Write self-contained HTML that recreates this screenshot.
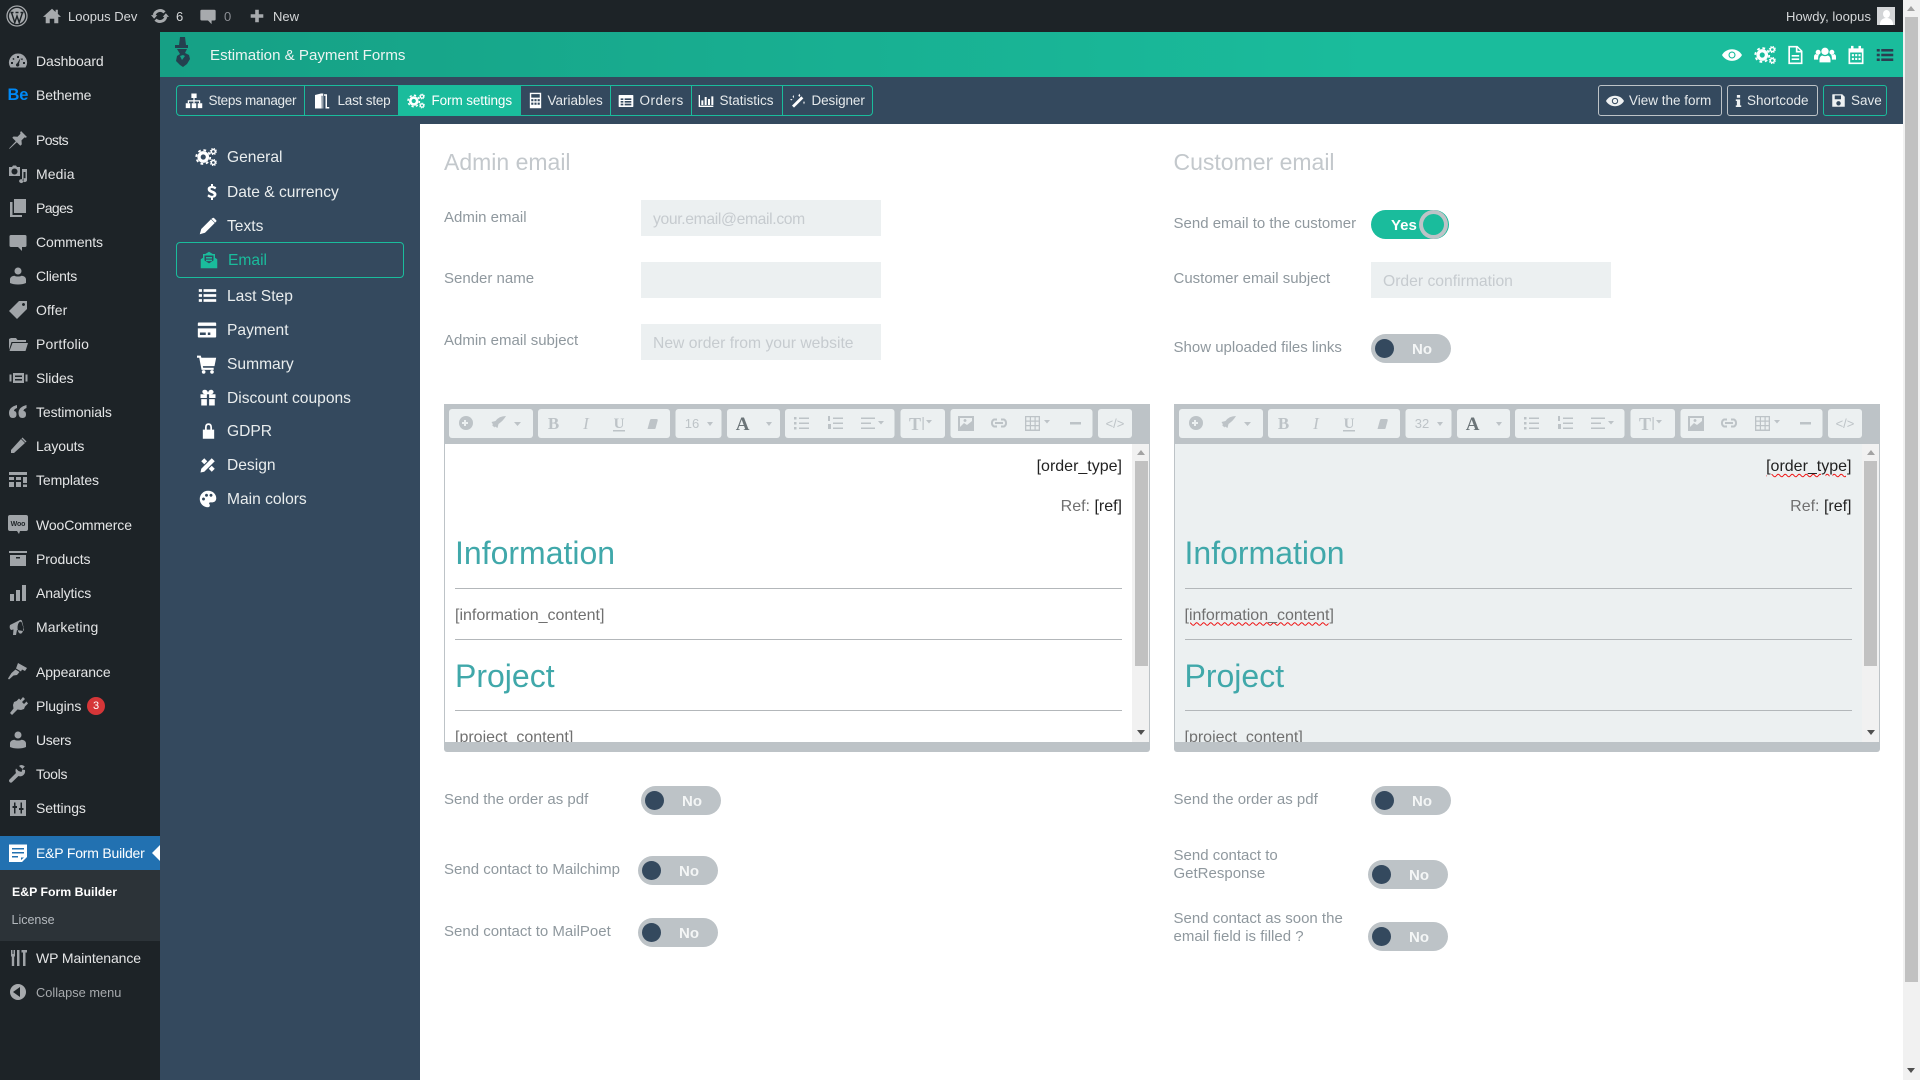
<!DOCTYPE html>
<html><head><meta charset="utf-8"><title>E&amp;P Form Builder</title>
<style>
html,body{margin:0;padding:0;width:1920px;height:1080px;overflow:hidden;background:#fff;font-family:"Liberation Sans",sans-serif}
*{box-sizing:border-box}
.a{position:absolute}
.t{position:absolute;white-space:nowrap}
svg.ic{position:absolute;overflow:visible}
#bar{left:0;top:0;width:1920px;height:32px;background:#1d2327;color:#d5d7d9;font-size:13px;line-height:33px}
#side{left:0;top:32px;width:160px;height:1048px;background:#1d2327}
.m{position:absolute;left:0;width:160px;height:34px;line-height:34px;font-size:14px;color:#e4e5e6;letter-spacing:-.1px}
.m span{position:absolute;left:36px;white-space:nowrap}
.m svg{position:absolute;left:8px;top:7px;width:20px;height:20px;color:#a0a4a8}
#head{left:160px;top:32px;width:1743px;height:45px;background:linear-gradient(to right,#16a085 0,#1abc9c 70%);color:#fff}
#panel{left:160px;top:77px;width:1743px;height:1003px;background:#34495e}
#main{left:420px;top:124px;width:1483px;height:956px;background:#fff}
#sb{left:1903px;top:0;width:17px;height:1080px;background:#f1f1f1}
#tabs{left:176px;top:85px;width:697px;height:31px;border:1px solid #1abc9c;border-radius:4px;overflow:hidden}
.tab{position:absolute;top:85px;height:31px;color:#e6eaec;font-size:13.5px;line-height:32px;letter-spacing:-.1px;white-space:nowrap}
.sep{position:absolute;top:86px;width:1px;height:29px;background:#1abc9c}
.btn{position:absolute;top:85px;height:31px;border:1px solid #bdc3c7;border-radius:3px;color:#e6eaec;font-size:13.5px;line-height:30px}
.n{position:absolute;left:227px;font-size:15.6px;color:#e9edee;line-height:24px;white-space:nowrap;margin-top:1px}
.l{position:absolute;color:#8f989e;font-size:15px;line-height:18px;white-space:nowrap;margin-top:1px}
.h{position:absolute;font-size:23px;line-height:30px;color:#c3c8cc;top:147px;white-space:nowrap}
.inp{position:absolute;width:240px;height:36px;background:#ecf0f1;color:#c6cbcf;font-size:15.7px;line-height:39px;padding-left:12px;white-space:nowrap}
.tg{position:absolute;width:80px;height:29px;border-radius:15px;background:#bdc3c7;color:#f4f6f6;font-weight:bold;font-size:15px;line-height:31px}
.tg i{position:absolute;left:4px;top:5px;width:19px;height:19px;border-radius:50%;background:#34495e}
.tg b{position:absolute;left:41px;top:0}
.ed{position:absolute;top:404px;width:706px;height:348px;background:#bdc3c7;border-radius:0 0 3px 3px}
.body{position:absolute;left:0;top:40px;width:706px;height:298px;border:solid #bdc3c7;border-width:0 1px;overflow:hidden}
.ed .tx{position:absolute;font-size:16px;line-height:20px;white-space:nowrap;color:#707070}
.ed .hd{position:absolute;left:11px;font-size:32px;line-height:38px;color:#40a8aa;white-space:nowrap}
.ed .ln{position:absolute;left:11px;width:667px;height:1px;background:#b3b7ba}
.spell{text-decoration:underline wavy #e11;text-decoration-thickness:1px;text-underline-offset:2px}
</style></head><body>

<svg width="0" height="0" style="position:absolute">
<defs>
<symbol id="cogs" viewBox="0 0 24 24"><g fill="none" stroke="currentColor"><circle cx="9" cy="12" r="4.6" stroke-width="3.6"/><circle cx="9" cy="12" r="7.6" stroke-width="2" stroke-dasharray="3 2.96"/><circle cx="20" cy="6" r="2.2" stroke-width="1.6"/><circle cx="20" cy="6" r="3.4" stroke-width="1" stroke-dasharray="1.4 1.27"/><circle cx="20" cy="18" r="2.2" stroke-width="1.6"/><circle cx="20" cy="18" r="3.4" stroke-width="1" stroke-dasharray="1.4 1.27"/></g></symbol>
<symbol id="eye" viewBox="0 0 24 24"><path fill="currentColor" fill-rule="evenodd" d="M0 12C5 2.700 19 2.700 24 12C19 21.300 5 21.300 0 12ZM12 7.800a4.200 4.200 0 1 0 .01 0Z"/><circle cx="12" cy="12" r="2.900" fill="currentColor"/></symbol>
<symbol id="file" viewBox="0 0 24 24"><path fill="currentColor" fill-rule="evenodd" d="M4 1h11l6 6v16H4ZM6 3v18h13V9h-6V3ZM15 3.500V7h3.500ZM8 12h9v2H8ZM8 16h9v2H8Z"/></symbol>
<symbol id="users" viewBox="0 0 24 24"><g fill="currentColor"><circle cx="12" cy="8" r="4"/><circle cx="4.500" cy="9" r="2.700"/><circle cx="19.500" cy="9" r="2.700"/><path d="M6 20v-3c0-3 2-4.500 3-4.500 1.500 1 4.500 1 6 0 1 0 3 1.500 3 4.500v3Z"/><path d="M0 17v-3c0-2 1-3 2-3 1 .8 2.500.8 3.500.5C4.500 13 4.500 15 4.500 17ZM24 17v-3c0-2-1-3-2-3-1 .8-2.500.8-3.500.5 1 1.500 1 3.500 1 5.500Z"/></g></symbol>
<symbol id="cal" viewBox="0 0 24 24"><path fill="currentColor" fill-rule="evenodd" d="M3 4h3V1h3v3h6V1h3v3h3v19H3ZM5 9v12h14V9ZM7 11h2.500v2.500H7ZM11 11h2.500v2.500H11ZM15 11h2.500v2.500H15ZM7 15.500h2.500V18H7ZM11 15.500h2.500V18H11ZM15 15.500h2.500V18H15Z"/></symbol>
<symbol id="list" viewBox="0 0 24 24"><g fill="currentColor"><rect x="1" y="4" width="4" height="3.400"/><rect x="7" y="4" width="16" height="3.400"/><rect x="1" y="10.300" width="4" height="3.400"/><rect x="7" y="10.300" width="16" height="3.400"/><rect x="1" y="16.600" width="4" height="3.400"/><rect x="7" y="16.600" width="16" height="3.400"/></g></symbol>
<symbol id="sitemap" viewBox="0 0 24 24"><g fill="currentColor"><rect x="8.500" y="2" width="7" height="6"/><rect x="1" y="15" width="6" height="6.500"/><rect x="9" y="15" width="6" height="6.500"/><rect x="17" y="15" width="6" height="6.500"/><path d="M11.200 8h1.600v3h7.500v4h-1.600v-2.400h-5.900V15h-1.600v-2.400H5.300V15H3.700v-4h7.500Z"/></g></symbol>
<symbol id="door" viewBox="0 0 24 24"><path fill="currentColor" d="M2 22h2V4l8-2h3v20h-1V5h-1.200L13 22zM16 3h4v17h3v2h-5V5h-2z"/></symbol>
<symbol id="calc" viewBox="0 0 24 24"><path fill="currentColor" fill-rule="evenodd" d="M4 1h16v22H4ZM6 3v5h12V3ZM6 10v3h3v-3ZM10.500 10v3h3v-3ZM15 10v3h3v-3ZM6 15v3h3v-3ZM10.500 15v3h3v-3ZM15 15v3h3v-3Z"/></symbol>
<symbol id="table" viewBox="0 0 24 24"><path fill="currentColor" fill-rule="evenodd" d="M2 3h20q1 0 1 1v16q0 1-1 1H2q-1 0-1-1V4q0-1 1-1ZM4 8v2.500h4V8ZM10 8v2.500h10V8ZM4 12v2.500h4V12ZM10 12v2.500h10V12ZM4 16v2.500h4V16ZM10 16v2.500h10V16Z"/></symbol>
<symbol id="chart" viewBox="0 0 24 24"><path fill="currentColor" d="M1 3h2v16h20v2H1zM5 11h3v7H5zM10 6h3v12h-3zM15 9h3v9h-3zM20 5h3v13h-3z"/></symbol>
<symbol id="wand" viewBox="0 0 24 24"><g fill="currentColor"><path d="M3 19 17 5l3 3L6 22z"/><path d="M14 1l1.500 3L14 6l-1.500-2zM5 3l1 2.500L5 8 4 5.500zM21 12l1 2.500-1 2.500-1-2.500zM2 9l2 1-2 1-2-1z"/></g></symbol>
<symbol id="info" viewBox="0 0 24 24"><path fill="currentColor" d="M9 1h6v5H9zM7 9h8v11h2v3H7v-3h2v-8H7z"/></symbol>
<symbol id="save" viewBox="0 0 24 24"><path fill="currentColor" fill-rule="evenodd" d="M3 2h15l4 4v16H2V3q0-1 1-1ZM6 4v6h10V4ZM12 13a3.500 3.500 0 1 0 .01 0Z"/></symbol>
<symbol id="pencil" viewBox="0 0 24 24"><path fill="currentColor" d="M1 23l2-7L16 3l5 5L8 21zM18 1.500q1-1 2-.2l3 3q.8 1-.2 2L21.500 7.500l-5-5z"/></symbol>
<symbol id="dollar" viewBox="0 0 24 24"><path fill="currentColor" d="M10.500 0h3v3q3 .4 5 2l-1.800 3q-2.500-2-5-2-2 0-2 1.500 0 1.200 3 2.200 6 2 6 6 0 3.800-5.200 5V24h-3v-3.300Q7 20.300 5 18.300l2-3q2.500 2.500 5 2.500 2.500 0 2.500-1.800 0-1.300-3.500-2.500-5.500-1.900-5.500-6Q5.500 3.800 10.500 3Z"/></symbol>
<symbol id="mail" viewBox="0 0 24 24"><path fill="currentColor" fill-rule="evenodd" d="M12 1l5 3h3v5l3 2v12H1V11l3-2V4h3ZM6 6v6.500l6 4 6-4V6ZM8 8h8v2H8ZM8 11.500h8v2H8Z"/></symbol>
<symbol id="card" viewBox="0 0 24 24"><path fill="currentColor" fill-rule="evenodd" d="M2 3h20q1 0 1 1v3H1V4q0-1 1-1ZM1 10h22v10q0 1-1 1H2q-1 0-1-1ZM3.500 15v3h7v-3ZM13 15v3h3v-3Z"/></symbol>
<symbol id="cart" viewBox="0 0 24 24"><g fill="currentColor"><path d="M0 2h4.500l.8 2.500H23l-2 10H7l.4 2H20V19H5.500L2.700 4.500H0z"/><circle cx="8" cy="21.500" r="2.200"/><circle cx="18" cy="21.500" r="2.200"/></g></symbol>
<symbol id="gift" viewBox="0 0 24 24"><path fill="currentColor" d="M2 7h7q-4 0-4.500-3T8 1q3 0 4 4 1-4 4-4t3.500 3Q19 7 15 7h7v5H13.500V7h-3v5H2zM3 13.500h7.500V22H3zM13.500 13.500H21V22h-7.500z"/></symbol>
<symbol id="lock" viewBox="0 0 24 24"><path fill="currentColor" fill-rule="evenodd" d="M7 10V7q0-6 5-6t5 6v3h3v13H4V10ZM9.500 10h5V7q0-3.500-2.500-3.500T9.500 7Z"/></symbol>
<symbol id="design" viewBox="0 0 24 24"><path fill="currentColor" d="M3 7l4-4 4 4-4 4zM13 17l4-4 4 4-4 4zM3 17 17 3l4 4L7 21l-5 1z"/></symbol>
<symbol id="palette" viewBox="0 0 24 24"><path fill="currentColor" fill-rule="evenodd" d="M12 1c6.500 0 11 4.500 11 10 0 4-3 5.500-6 5.500h-2c-1.500 0-2 1.500-1 2.500 1 1.300.5 4-2 4C6 23 1 18 1 12S6 1 12 1ZM6 10a2 2 0 1 0 .01 0ZM10 5a2 2 0 1 0 .01 0ZM16 5a2 2 0 1 0 .01 0Z"/></symbol>
<symbol id="gauge" viewBox="0 0 20 20"><path fill="currentColor" fill-rule="evenodd" d="M10 2.500a9 9 0 0 1 7.500 14H2.500A9 9 0 0 1 10 2.500ZM9 5v2h2V5ZM4.500 7.500 5 9l1.400-.6L6 7ZM13 8.500l1.300.7.600-1.400-1.300-.6ZM3 11v2h2v-2ZM15 11v2h2v-2ZM12.500 7 9.200 12.300a1.700 1.700 0 1 0 1.800.6Z"/></symbol>
<symbol id="pin" viewBox="0 0 20 20"><path fill="currentColor" d="M13 1l6 6-1.500.8-1-.4-3 3 .3 4-1.500 1.300-3.500-3.500L2 18.500l-1 .5.500-1 6.300-6.800-3.500-3.500L5.500 6.500l4 .3 3-3-.4-1z"/></symbol>
<symbol id="media" viewBox="0 0 20 20"><path fill="currentColor" fill-rule="evenodd" d="M1 3h3l1-1.500h3L9 3h3v9H1ZM6.500 4.500a3 3 0 1 0 .01 0ZM14 5h5v11a2.200 2 0 1 1-1.500-1.800V8h-2v9a2.200 2 0 1 1-1.500-1.800Z"/></symbol>
<symbol id="pages" viewBox="0 0 20 20"><path fill="currentColor" fill-rule="evenodd" d="M6 1h12v14H6ZM2 4h2.500v13H14v2H2Z"/></symbol>
<symbol id="bubble" viewBox="0 0 20 20"><path fill="currentColor" d="M3 3h14q1.500 0 1.500 1.500v9q0 1.500-1.500 1.500h-3v4l-4-4H3q-1.500 0-1.500-1.500v-9Q1.500 3 3 3Z"/></symbol>
<symbol id="user" viewBox="0 0 20 20"><g fill="currentColor"><circle cx="10" cy="5" r="3.500"/><path d="M2 17v-3.500c0-2.500 2-3.500 4.500-3.800 1.500 1 5.500 1 7 0 2.500.3 4.500 1.300 4.500 3.800V17q-3 1.500-8 1.500T2 17Z"/></g></symbol>
<symbol id="tag" viewBox="0 0 20 20"><path fill="currentColor" fill-rule="evenodd" d="M11 1h8v8L9 19 1 11ZM15.500 3a1.500 1.500 0 1 0 .01 0Z"/></symbol>
<symbol id="folder" viewBox="0 0 20 20"><path fill="currentColor" d="M1 5l2-1h5l1.500 2H18v2H3.500L1 16zM4.500 9H20l-2.500 8H1.500z"/></symbol>
<symbol id="slides" viewBox="0 0 20 20"><path fill="currentColor" fill-rule="evenodd" d="M5 5h11v10H5ZM7 7.500v1.500h7V7.500ZM7 11v1.500h7V11ZM1.500 6.500h2v7h-2ZM17.500 6.500h2v7h-2Z"/></symbol>
<symbol id="quote" viewBox="0 0 20 20"><path fill="currentColor" d="M9 3v3Q6 7 6 9q2.500 0 2.500 3.500T5 16q-4 0-4-5 0-6 8-8ZM18.500 3v3q-3 1-3 3 2.500 0 2.500 3.500T14.500 16q-4 0-4-5 0-6 8-8Z"/></symbol>
<symbol id="feather" viewBox="0 0 20 20"><path fill="currentColor" d="M13 3l4 4L6 17H3v-3zM14.500 1.500l4 4-1 1-4-4z"/></symbol>
<symbol id="tpl" viewBox="0 0 20 20"><path fill="currentColor" d="M1 2h18v3H1zM1 7h5v3H1zM8 7h5v3H8zM15 7h4v6h-4zM1 12h5v5H1zM8 12h5v5H8zM15 14.500h4V17h-4z"/></symbol>
<symbol id="archive" viewBox="0 0 20 20"><path fill="currentColor" d="M1 2h18v2H1zM2 6h16v11H2zM8 8v1.500h4V8z" fill-rule="evenodd"/></symbol>
<symbol id="bars" viewBox="0 0 20 20"><path fill="currentColor" d="M2 11h4v7H2zM8 7h4v11H8zM14 2h4v16h-4z"/></symbol>
<symbol id="mega" viewBox="0 0 20 20"><path fill="currentColor" fill-rule="evenodd" d="M2 8l10-5q1.500-.5 2 1l2 8q.3 1.500-1 2L9 13l-1 5H5l.5-5.500L3 13Q1 11 2 8ZM13.500 5a3 6 0 1 0 2 6z"/></symbol>
<symbol id="brush" viewBox="0 0 20 20"><path fill="currentColor" d="M10 1l9 5-2 3-3-1.500-1 2-5-3zM7.500 7.500l4 2.500-2.500 3-3.500.5-4.500 4-1-1 3.500-5.500z"/></symbol>
<symbol id="plug" viewBox="0 0 20 20"><path fill="currentColor" d="M15 1l2 2-3 3 2 2 2.500-2.500 1.500 2-3 3-1 2.500-3 1-3.500-.5L4 19l-2-2 3.500-4.500-.5-3.500 1-3 2.500-1L11 2.500l1.500 1.500z"/></symbol>
<symbol id="wrench" viewBox="0 0 20 20"><path fill="currentColor" d="M13.500 1q-1.500 0-2.500 1l3.500 3-1 3-3-1L8 4.500Q7 6.500 8 9L1.500 15.500q-1 1.200 0 2.500 1.300 1.300 2.500.2L10.500 12q3 1 5-1 2-2 1.500-5l-3-.5 2.800-3Q15 1 13.500 1Z"/></symbol>
<symbol id="sliders" viewBox="0 0 20 20"><path fill="currentColor" fill-rule="evenodd" d="M2 2h16v16H2ZM6 4.500v3.500H4.500v2H6v5.500h1.500V10H9V8H7.500V4.500ZM12.500 4.500V10H11v2h1.500v3.500H14V12h1.500v-2H14V4.500Z"/></symbol>
<symbol id="form" viewBox="0 0 20 20"><path fill="currentColor" fill-rule="evenodd" d="M1 1.500h18V14l-5 5H1ZM4 5v1.500h12V5ZM4 9v1.500h12V9ZM4 13v1.500h6V13ZM13 14.500v2.500l3-2.500Z"/></symbol>
<symbol id="fork" viewBox="0 0 20 20"><path fill="currentColor" d="M3 2h1v4h.5V2h1v4H6V2h1v6L6.200 9v9H3.800V9L3 8zM9 2h2.500v16H9zM13.500 2H19v2.500h-1.500V18H15V4.500h-1.500z"/></symbol>
<symbol id="house" viewBox="0 0 20 20"><path fill="currentColor" d="M10 2l4 3.500V3h2.500v4.700L20 11h-3v7h-4.500v-5h-5v5H3v-7H0z"/></symbol>
<symbol id="update" viewBox="0 0 20 20"><path fill="none" stroke="currentColor" stroke-width="3.200" d="M3.500 9A6.800 6.800 0 0 1 15 6M16.500 11A6.800 6.800 0 0 1 5 14"/><path fill="currentColor" d="M0 9h7l-3.500 4zM20 11h-7l3.500-4z"/></symbol>
<symbol id="plus" viewBox="0 0 20 20"><path fill="currentColor" d="M8 3h4v5h5v4h-5v5H8v-5H3V8h5z"/></symbol>
</defs>
</svg>

<!-- admin bar -->
<div id="bar" class="a">
<svg class="ic" style="left:6px;top:5px;width:22px;height:22px;color:#a7aaad" viewBox="0 0 22 22"><circle cx="11" cy="11" r="10" fill="none" stroke="currentColor" stroke-width="1.300"/><circle cx="11" cy="11" r="8" fill="currentColor"/><path d="M5.500 7.500l3.300 10 2.200-6.500 2.200 6.500 3.300-10M4.500 7.500h3M9.500 7.500h3M14.500 7.500h3" fill="none" stroke="#1d2327" stroke-width="1.400"/></svg>
<svg class="ic" style="left:43px;top:7px;width:18px;height:18px;color:#a7aaad"><use href="#house"/></svg>
<span class="t" style="left:68px;top:0">Loopus Dev</span>
<svg class="ic" style="left:151px;top:7px;width:18px;height:18px;color:#a7aaad"><use href="#update"/></svg>
<span class="t" style="left:176px;top:0">6</span>
<svg class="ic" style="left:199px;top:7px;width:18px;height:18px;color:#a7aaad"><use href="#bubble"/></svg>
<span class="t" style="left:224px;top:0;color:#8c8f94">0</span>
<svg class="ic" style="left:248px;top:7px;width:18px;height:18px;color:#a7aaad"><use href="#plus"/></svg>
<span class="t" style="left:273px;top:0">New</span>
<span class="t" style="right:49px;top:0;letter-spacing:.05px">Howdy, loopus</span>
<div class="a" style="left:1877px;top:7px;width:18px;height:18px;background:#d3d5d7;overflow:hidden"><div class="a" style="left:5.500px;top:2.500px;width:7px;height:8px;border-radius:50%;background:#fff"></div><div class="a" style="left:2.500px;top:10.500px;width:13px;height:9px;border-radius:6px 6px 0 0;background:#fff"></div></div>
</div>

<!-- wp sidebar -->
<div id="side" class="a"></div>
<div class="a" style="left:0;top:0">
<div class="m" style="top:44px"><svg><use href="#gauge"/></svg><span>Dashboard</span></div>
<div class="m" style="top:78px"><b style="position:absolute;left:7.500px;top:0;font-size:16.500px;color:#0089f7;letter-spacing:-.2px">Be</b><span>Betheme</span></div>
<div class="m" style="top:123px"><svg><use href="#pin"/></svg><span style="letter-spacing:-.6px">Posts</span></div>
<div class="m" style="top:157px"><svg><use href="#media"/></svg><span style="letter-spacing:.1px">Media</span></div>
<div class="m" style="top:191px"><svg><use href="#pages"/></svg><span style="letter-spacing:-.6px">Pages</span></div>
<div class="m" style="top:225px"><svg><use href="#bubble"/></svg><span>Comments</span></div>
<div class="m" style="top:259px"><svg><use href="#user"/></svg><span style="letter-spacing:-.25px">Clients</span></div>
<div class="m" style="top:293px"><svg><use href="#tag"/></svg><span style="letter-spacing:.1px">Offer</span></div>
<div class="m" style="top:327px"><svg><use href="#folder"/></svg><span style="letter-spacing:.2px">Portfolio</span></div>
<div class="m" style="top:361px"><svg><use href="#slides"/></svg><span>Slides</span></div>
<div class="m" style="top:395px"><svg><use href="#quote"/></svg><span>Testimonials</span></div>
<div class="m" style="top:429px"><svg><use href="#feather"/></svg><span>Layouts</span></div>
<div class="m" style="top:463px"><svg><use href="#tpl"/></svg><span>Templates</span></div>
<div class="m" style="top:508px"><svg viewBox="0 0 20 20"><path fill="currentColor" d="M2 0h16q2 0 2 2v12q0 2-2 2h-6l-1 3-2-3H2q-2 0-2-2V2q0-2 2-2Z"/><text x="10" y="11" font-size="7" font-weight="bold" text-anchor="middle" fill="#1d2327" font-family="Liberation Sans,sans-serif">Woo</text></svg><span>WooCommerce</span></div>
<div class="m" style="top:542px"><svg><use href="#archive"/></svg><span>Products</span></div>
<div class="m" style="top:576px"><svg><use href="#bars"/></svg><span>Analytics</span></div>
<div class="m" style="top:610px"><svg><use href="#mega"/></svg><span style="letter-spacing:.1px">Marketing</span></div>
<div class="m" style="top:655px"><svg><use href="#brush"/></svg><span>Appearance</span></div>
<div class="m" style="top:689px"><svg><use href="#plug"/></svg><span>Plugins</span><div class="a" style="left:87px;top:8px;width:18px;height:18px;border-radius:50%;background:#d63638;color:#fff;font-size:11px;line-height:18px;text-align:center;letter-spacing:0">3</div></div>
<div class="m" style="top:723px"><svg><use href="#user"/></svg><span style="letter-spacing:-.3px">Users</span></div>
<div class="m" style="top:757px"><svg><use href="#wrench"/></svg><span style="letter-spacing:-.3px">Tools</span></div>
<div class="m" style="top:791px"><svg><use href="#sliders"/></svg><span>Settings</span></div>
<div class="m" style="top:836px;background:#2271b1;color:#fff"><svg style="color:#fff"><use href="#form"/></svg><span style="letter-spacing:-.2px">E&amp;P Form Builder</span><div class="a" style="left:152px;top:9px;width:0;height:0;border:8px solid transparent;border-left:0;border-right:8px solid #fff"></div></div>
<div class="a" style="left:0;top:870px;width:160px;height:71px;background:#2c3338"></div>
<span class="t" style="left:12px;top:883px;font-size:12.300px;line-height:18px;font-weight:bold;color:#fff">E&amp;P Form Builder</span>
<span class="t" style="left:11.500px;top:910.500px;font-size:12.500px;line-height:18px;color:#b4b9be">License</span>
<div class="m" style="top:941px"><svg><use href="#fork"/></svg><span>WP Maintenance</span></div>
<div class="a" style="left:10px;top:984px;width:16px;height:16px;border-radius:50%;background:#a7aaad"></div>
<div class="a" style="left:13px;top:987px;width:0;height:0;border:5px solid transparent;border-left:0;border-right:7px solid #1d2327"></div>
<span class="t" style="left:36px;top:983.500px;font-size:12.800px;line-height:18px;color:#a7aaad">Collapse menu</span>
</div>

<!-- plugin header -->
<div id="head" class="a"></div>
<svg class="ic" style="left:173px;top:37px;width:18px;height:32px;color:#24404f" viewBox="0 0 18 32"><path fill="currentColor" d="M7 0h5l1 8h2v3H2V8h4zM4 12h10l-2 4 4 2 1 4-3 5-4 3-3-2-4-4 1-5 3-2zM7 19l2 4 3-4-2-1z" fill-rule="evenodd"/></svg>
<span class="t" style="left:210px;top:45px;font-size:15.100px;line-height:22px;color:#ecf4f2">Estimation &amp; Payment Forms</span>
<svg class="ic" style="left:1722px;top:45px;width:20px;height:20px;color:#fff"><use href="#eye"/></svg>
<svg class="ic" style="left:1754px;top:44px;width:22px;height:22px;color:#fff"><use href="#cogs"/></svg>
<svg class="ic" style="left:1785px;top:45px;width:20px;height:20px;color:#fff"><use href="#file"/></svg>
<svg class="ic" style="left:1814px;top:44px;width:22px;height:22px;color:#fff"><use href="#users"/></svg>
<svg class="ic" style="left:1846px;top:45px;width:20px;height:20px;color:#fff"><use href="#cal"/></svg>
<svg class="ic" style="left:1876px;top:45px;width:18px;height:20px;color:#2c3e50"><use href="#list"/></svg>

<div id="panel" class="a"></div>
<div id="main" class="a"></div>

<!-- tabs -->
<div id="tabs" class="a"></div>
<div class="a" style="left:398px;top:85px;width:122px;height:31px;background:#1abc9c"></div>
<div class="sep" style="left:304px"></div><div class="sep" style="left:398px"></div><div class="sep" style="left:610px"></div><div class="sep" style="left:691px"></div><div class="sep" style="left:782px"></div><div class="sep" style="left:520px"></div>
<svg class="ic" style="left:185px;top:92px;width:18px;height:18px;color:#fff"><use href="#sitemap"/></svg>
<span class="tab" style="left:208.500px;letter-spacing:-.3px">Steps manager</span>
<svg class="ic" style="left:312px;top:92px;width:18px;height:18px;color:#fff"><use href="#door"/></svg>
<span class="tab" style="left:337.500px;letter-spacing:-.2px">Last step</span>
<svg class="ic" style="left:407px;top:92px;width:18px;height:18px;color:#fff"><use href="#cogs"/></svg>
<span class="tab" style="left:431.500px;color:#fff">Form settings</span>
<svg class="ic" style="left:527px;top:92px;width:17px;height:17px;color:#fff"><use href="#calc"/></svg>
<span class="tab" style="left:547.500px;letter-spacing:0">Variables</span>
<svg class="ic" style="left:618px;top:93px;width:16px;height:16px;color:#fff"><use href="#table"/></svg>
<span class="tab" style="left:639.500px;letter-spacing:.5px">Orders</span>
<svg class="ic" style="left:698px;top:93px;width:16px;height:16px;color:#fff"><use href="#chart"/></svg>
<span class="tab" style="left:719.500px;letter-spacing:0">Statistics</span>
<svg class="ic" style="left:790px;top:93px;width:16px;height:16px;color:#fff"><use href="#wand"/></svg>
<span class="tab" style="left:811.500px">Designer</span>

<div class="btn" style="left:1598px;width:124px"><span class="t" style="left:30px;top:0">View the form</span></div>
<svg class="ic" style="left:1606px;top:92px;width:18px;height:18px;color:#eef1f2"><use href="#eye"/></svg>
<div class="btn" style="left:1727px;width:91px"><span class="t" style="left:19px;top:0">Shortcode</span></div>
<svg class="ic" style="left:1732px;top:93px;width:13px;height:16px;color:#eef1f2"><use href="#info"/></svg>
<div class="btn" style="left:1823px;width:64px;border-color:#1abc9c"><span class="t" style="left:27px;top:0">Save</span></div>
<svg class="ic" style="left:1831px;top:93px;width:15px;height:15px;color:#eef1f2"><use href="#save"/></svg>

<!-- settings nav -->
<div class="a" style="left:176px;top:242px;width:228px;height:36px;border:1px solid #1abc9c;border-radius:4px"></div>
<svg class="ic" style="left:195px;top:146px;width:22px;height:22px;color:#fff"><use href="#cogs"/></svg><span class="n" style="top:145px">General</span>
<svg class="ic" style="left:204px;top:182px;width:16px;height:20px;color:#fff"><use href="#dollar"/></svg><span class="n" style="top:180px">Date &amp; currency</span>
<svg class="ic" style="left:199px;top:217px;width:18px;height:18px;color:#fff"><use href="#pencil"/></svg><span class="n" style="top:214px">Texts</span>
<svg class="ic" style="left:200px;top:251px;width:18px;height:18px;color:#1abc9c"><use href="#mail"/></svg><span class="n" style="top:248px;left:228px;color:#1abc9c">Email</span>
<svg class="ic" style="left:198px;top:286px;width:19px;height:19px;color:#fff"><use href="#list"/></svg><span class="n" style="top:284px">Last Step</span>
<svg class="ic" style="left:197px;top:320px;width:20px;height:20px;color:#fff"><use href="#card"/></svg><span class="n" style="top:318px">Payment</span>
<svg class="ic" style="left:197px;top:354px;width:20px;height:20px;color:#fff"><use href="#cart"/></svg><span class="n" style="top:352px">Summary</span>
<svg class="ic" style="left:199px;top:389px;width:18px;height:18px;color:#fff"><use href="#gift"/></svg><span class="n" style="top:386px">Discount coupons</span>
<svg class="ic" style="left:200px;top:422px;width:17px;height:18px;color:#fff"><use href="#lock"/></svg><span class="n" style="top:419px">GDPR</span>
<svg class="ic" style="left:199px;top:456px;width:18px;height:18px;color:#fff"><use href="#design"/></svg><span class="n" style="top:453px">Design</span>
<svg class="ic" style="left:199px;top:490px;width:18px;height:18px;color:#fff"><use href="#palette"/></svg><span class="n" style="top:487px">Main colors</span>

<!-- left column -->
<div class="h" style="left:444px">Admin email</div>
<span class="l" style="left:444px;top:208px">Admin email</span>
<div class="inp" style="left:641px;top:200px;letter-spacing:-.35px">your.email@email.com</div>
<span class="l" style="left:444px;top:269px">Sender name</span>
<div class="inp" style="left:641px;top:262px"></div>
<span class="l" style="left:444px;top:331px">Admin email subject</span>
<div class="inp" style="left:641px;top:324px">New order from your website</div>

<!-- right column -->
<div class="h" style="left:1173.500px">Customer email</div>
<span class="l" style="left:1173.500px;top:214px">Send email to the customer</span>
<div class="tg" style="left:1371px;top:210px;width:78px;background:#1abc9c;color:#fff"><b style="left:20px">Yes</b><i style="left:47.500px;top:0;width:29px;height:29px;background:#bdc3c7"></i><i style="left:51.500px;top:4px;width:21px;height:21px;background:#1abc9c"></i></div>
<span class="l" style="left:1173.500px;top:269px">Customer email subject</span>
<div class="inp" style="left:1371px;top:262px">Order confirmation</div>
<span class="l" style="left:1173.500px;top:338px">Show uploaded files links</span>
<div class="tg" style="left:1371px;top:334px"><i></i><b>No</b></div>

<!-- editors -->
<div class="ed" style="left:444px">
<svg class="a" style="left:0;top:0" width="706" height="40" font-family="Liberation Sans,sans-serif">
<g fill="#ecf0f1"><rect x="5" y="5" width="84" height="29" rx="3"/><rect x="94" y="5" width="132" height="29" rx="3"/><rect x="231.500" y="5" width="46" height="29" rx="3"/><rect x="283" y="5" width="53" height="29" rx="3"/><rect x="341" y="5" width="109.500" height="29" rx="3"/><rect x="456.500" y="5" width="44.500" height="29" rx="3"/><rect x="506.500" y="5" width="142" height="29" rx="3"/><rect x="654" y="5" width="34" height="29" rx="3"/></g>
<g fill="#bdc3c7"><circle cx="22" cy="19" r="7"/><path d="M62 12q-7 0-10.500 5l-4 1 1.500 2.500-1 .5 2.500 2.500.5-1 2.500 1.500 1-4q5-3.500 7.500-8z"/><path d="M70 18h7l-3.500 4zM263 18h6l-3 4zM322 18h6l-3 4zM434 17h6l-3 3.500zM482 16h6l-3 3.500z"/>
<path d="M203.500 25l2.500-9q.3-1 1.500-1h5q1.500 0 1.200 1.500l-2.200 8q-.3.500-1 .500z"/>
<text x="109.500" y="25" font-family="Liberation Serif,serif" font-weight="bold" font-size="17" text-anchor="middle">B</text>
<text x="142" y="25" font-family="Liberation Serif,serif" font-style="italic" font-size="17" text-anchor="middle">I</text>
<text x="175" y="24" font-family="Liberation Serif,serif" font-weight="bold" font-size="15" text-anchor="middle">U</text><rect x="169" y="26" width="12" height="1.500"/>
<text x="248" y="24" font-size="13" text-anchor="middle">16</text>
<path d="M350 13h2.500v2.500H350zM350 18h2.500v2.500H350zM350 23h2.500v2.500H350zM355 13.500h10v1.500h-10zM355 18.500h10v1.500h-10zM355 23.500h10v1.500h-10zM384 12h2v5h-2zM384 20h3v5h-3zM389 13.500h10v1.500h-10zM389 18.500h10v1.500h-10zM389 23.500h10v1.500h-10zM417 13.500h14v1.500h-14zM417 18.500h10v1.500h-10zM417 23.500h14v1.500h-14z"/>
<text x="471" y="26" font-family="Liberation Serif,serif" font-weight="bold" font-size="18" text-anchor="middle">T</text><rect x="478.500" y="13" width="1.200" height="13"/>
<path fill-rule="evenodd" d="M514 12h16v15h-16zM516 14v9l4-4 3 2 5-4v-3zM521 15a1.500 1.500 0 1 0 .01 0z"/>
<path fill="none" stroke="#bdc3c7" stroke-width="2" d="M553 15.500h-3a4 4 0 0 0 0 7h3M557 15.500h3a4 4 0 0 1 0 7h-3M551 19h8"/>
<g transform="translate(2 0)"><path d="M598 16h6l-3 3.500z"/><path fill-rule="evenodd" d="M579 12h15v15h-15zM580.300 13.300v3.200h3.500v-3.200zM585 13.300v3.200h3.500v-3.200zM589.700 13.300v3.200h3v-3.200zM580.300 17.800v3.200h3.500v-3.200zM585 17.800v3.200h3.500v-3.200zM589.700 17.800v3.200h3v-3.200zM580.300 22.300v3.200h3.500v-3.200zM585 22.300v3.200h3.500v-3.200zM589.700 22.300v3.200h3v-3.200z"/></g>
<rect x="626" y="18" width="11" height="2.500"/>
<text x="671" y="24" font-size="13" text-anchor="middle">&lt;/&gt;</text></g>
<path fill="#ecf0f1" d="M20 18h-2v2h2v2h2v-2h2v-2h-2v-2h-2z"/>
<text x="298.600" y="26" font-family="Liberation Serif,serif" font-weight="bold" font-size="19" text-anchor="middle" fill="#6b7478">A</text>
</svg>
<div class="body" style="background:#fff">
<div class="tx" style="right:27px;top:13px;color:#222">[order_type]</div>
<div class="tx" style="right:27px;top:53px">Ref: <span style="color:#222">[ref]</span></div>
<div class="hd" style="top:90px;left:10px">Information</div>
<div class="ln" style="top:144px;left:10px"></div>
<div class="tx" style="left:10px;top:161.500px">[information_content]</div>
<div class="ln" style="top:195px;left:10px"></div>
<div class="hd" style="top:213px;left:10px">Project</div>
<div class="ln" style="top:266px;left:10px"></div>
<div class="tx" style="left:10px;top:284px">[project_content]</div>
<div class="a" style="left:687px;top:0;width:17px;height:298px;background:#f1f1f1"></div>
<div class="a" style="left:689.500px;top:17px;width:13px;height:205px;background:#c1c1c1"></div>
<div class="a" style="left:692px;top:6px;width:0;height:0;border:4px solid transparent;border-top:0;border-bottom:5px solid #a3a3a3"></div>
<div class="a" style="left:692px;top:286px;width:0;height:0;border:4px solid transparent;border-bottom:0;border-top:5px solid #505050"></div>
</div>
</div>

<div class="ed" style="left:1173.500px">
<svg class="a" style="left:0;top:0" width="706" height="40" font-family="Liberation Sans,sans-serif">
<g fill="#ecf0f1"><rect x="5" y="5" width="84" height="29" rx="3"/><rect x="94" y="5" width="132" height="29" rx="3"/><rect x="231.500" y="5" width="46" height="29" rx="3"/><rect x="283" y="5" width="53" height="29" rx="3"/><rect x="341" y="5" width="109.500" height="29" rx="3"/><rect x="456.500" y="5" width="44.500" height="29" rx="3"/><rect x="506.500" y="5" width="142" height="29" rx="3"/><rect x="654" y="5" width="34" height="29" rx="3"/></g>
<g fill="#bdc3c7"><circle cx="22" cy="19" r="7"/><path d="M62 12q-7 0-10.500 5l-4 1 1.500 2.500-1 .5 2.500 2.500.5-1 2.500 1.500 1-4q5-3.500 7.500-8z"/><path d="M70 18h7l-3.500 4zM263 18h6l-3 4zM322 18h6l-3 4zM434 17h6l-3 3.500zM482 16h6l-3 3.500z"/>
<path d="M203.500 25l2.500-9q.3-1 1.500-1h5q1.500 0 1.200 1.500l-2.200 8q-.3.500-1 .500z"/>
<text x="109.500" y="25" font-family="Liberation Serif,serif" font-weight="bold" font-size="17" text-anchor="middle">B</text>
<text x="142" y="25" font-family="Liberation Serif,serif" font-style="italic" font-size="17" text-anchor="middle">I</text>
<text x="175" y="24" font-family="Liberation Serif,serif" font-weight="bold" font-size="15" text-anchor="middle">U</text><rect x="169" y="26" width="12" height="1.500"/>
<text x="248" y="24" font-size="13" text-anchor="middle">32</text>
<path d="M350 13h2.500v2.500H350zM350 18h2.500v2.500H350zM350 23h2.500v2.500H350zM355 13.500h10v1.500h-10zM355 18.500h10v1.500h-10zM355 23.500h10v1.500h-10zM384 12h2v5h-2zM384 20h3v5h-3zM389 13.500h10v1.500h-10zM389 18.500h10v1.500h-10zM389 23.500h10v1.500h-10zM417 13.500h14v1.500h-14zM417 18.500h10v1.500h-10zM417 23.500h14v1.500h-14z"/>
<text x="471" y="26" font-family="Liberation Serif,serif" font-weight="bold" font-size="18" text-anchor="middle">T</text><rect x="478.500" y="13" width="1.200" height="13"/>
<path fill-rule="evenodd" d="M514 12h16v15h-16zM516 14v9l4-4 3 2 5-4v-3zM521 15a1.500 1.500 0 1 0 .01 0z"/>
<path fill="none" stroke="#bdc3c7" stroke-width="2" d="M553 15.500h-3a4 4 0 0 0 0 7h3M557 15.500h3a4 4 0 0 1 0 7h-3M551 19h8"/>
<g transform="translate(2 0)"><path d="M598 16h6l-3 3.500z"/><path fill-rule="evenodd" d="M579 12h15v15h-15zM580.300 13.300v3.200h3.500v-3.200zM585 13.300v3.200h3.500v-3.200zM589.700 13.300v3.200h3v-3.200zM580.300 17.800v3.200h3.500v-3.200zM585 17.800v3.200h3.500v-3.200zM589.700 17.800v3.200h3v-3.200zM580.300 22.300v3.200h3.500v-3.200zM585 22.300v3.200h3.500v-3.200zM589.700 22.300v3.200h3v-3.200z"/></g>
<rect x="626" y="18" width="11" height="2.500"/>
<text x="671" y="24" font-size="13" text-anchor="middle">&lt;/&gt;</text></g>
<path fill="#ecf0f1" d="M20 18h-2v2h2v2h2v-2h2v-2h-2v-2h-2z"/>
<text x="298.600" y="26" font-family="Liberation Serif,serif" font-weight="bold" font-size="19" text-anchor="middle" fill="#6b7478">A</text>
</svg>
<div class="body" style="background:#ecf0f1">
<div class="tx" style="right:27px;top:13px;color:#222"><span class="spell">[order_type]</span></div>
<div class="tx" style="right:27px;top:53px">Ref: <span style="color:#222">[ref]</span></div>
<div class="hd" style="top:90px;left:10px">Information</div>
<div class="ln" style="top:144px;left:10px"></div>
<div class="tx" style="left:10px;top:161.500px"><span class="spell">[information_content]</span></div>
<div class="ln" style="top:195px;left:10px"></div>
<div class="hd" style="top:213px;left:10px">Project</div>
<div class="ln" style="top:266px;left:10px"></div>
<div class="tx" style="left:10px;top:284px">[project_content]</div>
<div class="a" style="left:687px;top:0;width:17px;height:298px;background:#f1f1f1"></div>
<div class="a" style="left:689.500px;top:17px;width:13px;height:205px;background:#c1c1c1"></div>
<div class="a" style="left:692px;top:6px;width:0;height:0;border:4px solid transparent;border-top:0;border-bottom:5px solid #a3a3a3"></div>
<div class="a" style="left:692px;top:286px;width:0;height:0;border:4px solid transparent;border-bottom:0;border-top:5px solid #505050"></div>
</div>
</div>

<!-- bottom toggles -->
<span class="l" style="left:444px;top:790px">Send the order as pdf</span>
<div class="tg" style="left:641px;top:786px"><i></i><b>No</b></div>
<span class="l" style="left:444px;top:860px">Send contact to Mailchimp</span>
<div class="tg" style="left:638px;top:856px"><i></i><b>No</b></div>
<span class="l" style="left:444px;top:922px">Send contact to MailPoet</span>
<div class="tg" style="left:638px;top:918px"><i></i><b>No</b></div>

<span class="l" style="left:1173.500px;top:790px">Send the order as pdf</span>
<div class="tg" style="left:1371px;top:786px"><i></i><b>No</b></div>
<span class="l" style="left:1173.500px;top:846px">Send contact to<br>GetResponse</span>
<div class="tg" style="left:1368px;top:860px"><i></i><b>No</b></div>
<span class="l" style="left:1173.500px;top:909px">Send contact as soon the<br>email field is filled ?</span>
<div class="tg" style="left:1368px;top:922px"><i></i><b>No</b></div>

<!-- page scrollbar -->
<div id="sb" class="a">
<div class="a" style="left:2px;top:17px;width:13px;height:965px;background:#c1c1c1"></div>
<div class="a" style="left:4px;top:6px;width:0;height:0;border:4.500px solid transparent;border-top:0;border-bottom:5px solid #a3a3a3"></div>
<div class="a" style="left:4px;top:1068px;width:0;height:0;border:4.500px solid transparent;border-bottom:0;border-top:5px solid #505050"></div>
</div>
</body></html>
